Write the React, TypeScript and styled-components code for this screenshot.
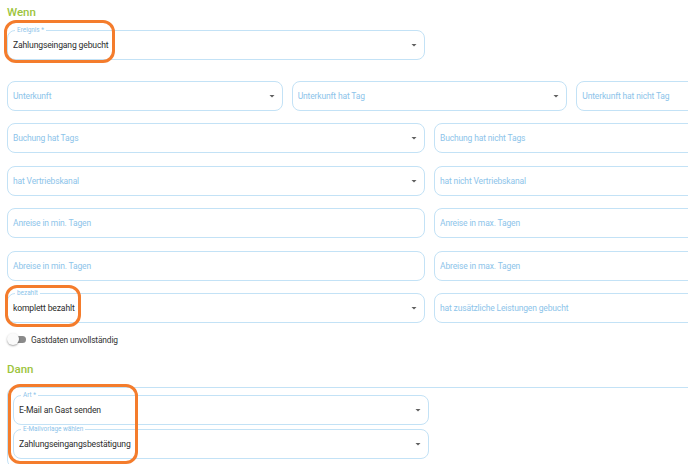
import React from "react";
import styled, { createGlobalStyle } from "styled-components";

const GlobalStyle = createGlobalStyle`
    html, body {
        margin: 0;
        padding: 0;
        background: #ffffff;
        overflow: hidden;
        font-family: Roboto, "Liberation Sans", sans-serif;
    }
`;

const Page = styled.div`
    position: relative;
    width: 845px;
    padding: 4px 0 0 7px;
`;

const SectionTitle = styled.h2`
    margin: 0;
    height: 16px;
    line-height: 16px;
    font-size: 11.5px;
    font-weight: 500;
    color: #9cc43c;
`;

const Half = styled.div`
    width: 418px;
    margin-top: 10px;
`;

const Grid = styled.div<{ $cols: number }>`
    display: grid;
    grid-template-columns: repeat(${({ $cols }) => $cols}, 1fr);
    column-gap: 9px;
    margin-top: ${({ $cols }) => ($cols === 3 ? "21px" : "12.4px")};
`;

const FieldBox = styled.div<{ $filled: boolean }>`
    position: relative;
    height: 30px;
    box-sizing: border-box;
    border: 1px solid #c3e2f6;
    border-radius: 8px;
    display: flex;
    align-items: center;
    padding: 0 4px 0 5px;
    font-size: ${({ $filled }) => ($filled ? "8.6px" : "8.5px")};
    letter-spacing: -0.15px;
    color: ${({ $filled }) => ($filled ? "#2c2c2c" : "#8dc4ea")};
    background: #fff;
`;

const FieldLabel = styled.span`
    position: absolute;
    top: -5px;
    left: 7px;
    padding: 0 2px;
    background: #fff;
    font-size: 6.4px;
    letter-spacing: 0;
    line-height: 9px;
    color: #8dc4ea;
`;

const FieldText = styled.span`
    flex: 1;
    white-space: nowrap;
    overflow: hidden;
`;

const Arrow = styled.svg`
    width: 12px;
    height: 12px;
    fill: #5f5f5f;
    flex-shrink: 0;
`;

const SwitchRow = styled.label`
    display: flex;
    align-items: center;
    gap: 5px;
    height: 16px;
    margin-top: 9px;
    font-size: 8.4px;
    letter-spacing: -0.15px;
    color: #333;
`;

const Track = styled.span`
    position: relative;
    width: 16px;
    height: 7px;
    margin-left: 3px;
    border-radius: 4px;
    background: #8a8a8a;
`;

const Thumb = styled.span`
    position: absolute;
    left: -3px;
    top: -3px;
    width: 12px;
    height: 12px;
    border-radius: 50%;
    background: #fafafa;
    box-shadow: 0 1px 2px rgba(0, 0, 0, 0.35);
`;

const DannTitle = styled(SectionTitle)`
    margin-top: 13px;
`;

const ActionCard = styled.div`
    margin-top: 10px;
    border: 1px solid #c3e2f6;
    border-radius: 8px;
    padding: 7px 0 8px 5px;
    display: flex;
    flex-direction: column;
    gap: 4px;
`;

const ActionField = styled.div`
    width: 416px;
`;

const Annotation = styled.div`
    position: absolute;
    box-sizing: border-box;
    border: 3px solid #f47c2c;
    border-radius: 12px;
    pointer-events: none;
`;

interface FieldProps {
    label?: string;
    value?: string;
    placeholder?: string;
    select?: boolean;
}

const Field: React.FC<FieldProps> = ({ label, value, placeholder, select }) => (
    <FieldBox $filled={!!value}>
        {label && <FieldLabel>{label}</FieldLabel>}
        <FieldText>{value ?? placeholder}</FieldText>
        {select && (
            <Arrow viewBox="0 0 24 24">
                <path d="M7 10l5 5 5-5z" />
            </Arrow>
        )}
    </FieldBox>
);

const rowsTwo: FieldProps[][] = [
    [
        { placeholder: "Buchung hat Tags", select: true },
        { placeholder: "Buchung hat nicht Tags" },
    ],
    [
        { placeholder: "hat Vertriebskanal", select: true },
        { placeholder: "hat nicht Vertriebskanal" },
    ],
    [{ placeholder: "Anreise in min. Tagen" }, { placeholder: "Anreise in max. Tagen" }],
    [{ placeholder: "Abreise in min. Tagen" }, { placeholder: "Abreise in max. Tagen" }],
    [
        { label: "bezahlt", value: "komplett bezahlt", select: true },
        { placeholder: "hat zusätzliche Leistungen gebucht" },
    ],
];

export default function App() {
    return (
        <>
            <GlobalStyle />
            <Page>
                <SectionTitle>Wenn</SectionTitle>
                <Half>
                    <Field label="Ereignis *" value="Zahlungseingang gebucht" select />
                </Half>

                <Grid $cols={3}>
                    <Field placeholder="Unterkunft" select />
                    <Field placeholder="Unterkunft hat Tag" select />
                    <Field placeholder="Unterkunft hat nicht Tag" />
                </Grid>

                {rowsTwo.map((row, i) => (
                    <Grid $cols={2} key={i}>
                        {row.map((f, j) => (
                            <Field key={j} {...f} />
                        ))}
                    </Grid>
                ))}

                <SwitchRow>
                    <Track>
                        <Thumb />
                    </Track>
                    Gastdaten unvollständig
                </SwitchRow>

                <DannTitle>Dann</DannTitle>
                <ActionCard>
                    <ActionField>
                        <Field label="Art *" value="E-Mail an Gast senden" select />
                    </ActionField>
                    <ActionField>
                        <Field label="E-Mailvorlage wählen" value="Zahlungseingangsbestätigung" select />
                    </ActionField>
                </ActionCard>

                <Annotation style={{ left: 4, top: 20, width: 111, height: 43 }} />
                <Annotation style={{ left: 5, top: 285, width: 76, height: 42 }} />
                <Annotation style={{ left: 8, top: 384, width: 130, height: 80 }} />
            </Page>
        </>
    );
}
